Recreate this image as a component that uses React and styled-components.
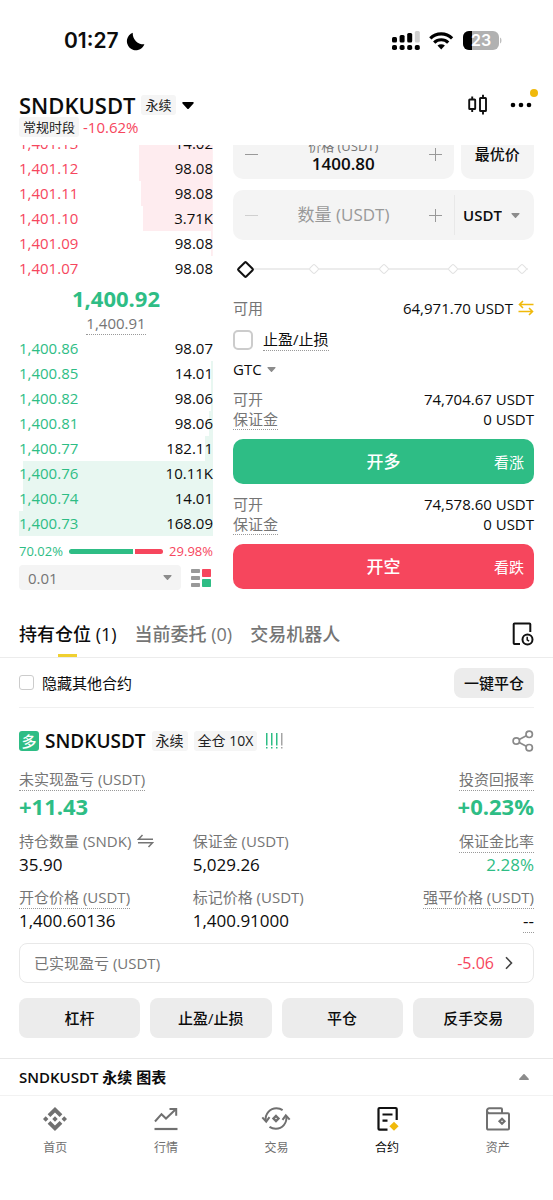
import React, { useState } from "react";
import styled, { createGlobalStyle } from "styled-components";
import { SiBinance } from "react-icons/si";

const asks = [
  { price: "1,401.13", amount: "14.02", depth: 38 },
  { price: "1,401.12", amount: "98.08", depth: 38 },
  { price: "1,401.11", amount: "98.08", depth: 37 },
  { price: "1,401.10", amount: "3.71K", depth: 36 },
  { price: "1,401.09", amount: "98.08", depth: 1 },
  { price: "1,401.07", amount: "98.08", depth: 0 },
];

const bids = [
  { price: "1,400.86", amount: "98.07", depth: 0 },
  { price: "1,400.85", amount: "14.01", depth: 1 },
  { price: "1,400.82", amount: "98.06", depth: 1 },
  { price: "1,400.81", amount: "98.06", depth: 2 },
  { price: "1,400.77", amount: "182.11", depth: 4 },
  { price: "1,400.76", amount: "10.11K", depth: 98 },
  { price: "1,400.74", amount: "14.01", depth: 98 },
  { price: "1,400.73", amount: "168.09", depth: 100 },
];

const metrics = [
  { label: "未实现盈亏 (USDT)", value: "+11.43", hint: true, large: true },
  { label: "投资回报率", value: "+0.23%", hint: true, large: true, end: true },
  { label: "持仓数量 (SNDK)", value: "35.90", swap: true },
  { label: "保证金 (USDT)", value: "5,029.26" },
  { label: "保证金比率", value: "2.28%", hint: true, green: true, end: true },
  { label: "开仓价格 (USDT)", value: "1,400.60136", hint: true },
  { label: "标记价格 (USDT)", value: "1,400.91000" },
  { label: "强平价格 (USDT)", value: "--", hint: true, valueHint: true, end: true },
];

const Caret = ({ up, size = 9, color = "#8c8c8c" }) => (
  <CaretSvg
    width={size}
    height={Math.round(size * 0.6)}
    viewBox="0 0 10 6"
    fill={color}
    $up={up}
    aria-hidden="true"
  >
    <path d="M.8 0h8.4c.7 0 1 .8.5 1.3L5.6 5.7a.8.8 0 0 1-1.2 0L.3 1.3C-.2.8.1 0 .8 0z" />
  </CaretSvg>
);

const StatusIcons = () => (
  <svg width="110" height="20" viewBox="0 0 110 20" aria-label="信号、无线网络、电量 23%">
    <g fill="#000">
      <rect x="0" y="6" width="5" height="5.5" rx="1.5" />
      <rect x="7.6" y="4" width="5" height="7.5" rx="1.5" />
      <rect x="15.2" y="2" width="5" height="9.5" rx="1.5" />
      <rect x="22.8" y="0" width="5" height="11.5" rx="1.5" fill="#d0d0d0" />
      <rect x="0" y="14" width="5" height="5" rx="1.8" />
      <rect x="7.6" y="14" width="5" height="5" rx="1.8" />
      <rect x="15.2" y="14" width="5" height="5" rx="1.8" />
      <rect x="22.8" y="14" width="5" height="5" rx="1.8" />
    </g>
    <g fill="none" stroke="#000" strokeWidth="3.2">
      <path d="M38.3 7.3a15.6 15.6 0 0 1 21.8 0" />
      <path d="M42.2 11.6a10 10 0 0 1 14 0" />
    </g>
    <path d="M49.2 18.5l-3.7-3.9a5.4 5.4 0 0 1 7.4 0z" />
    <clipPath id="cell">
      <rect x="71" y="0" width="36" height="19" rx="6" />
    </clipPath>
    <g clipPath="url(#cell)">
      <rect x="71" y="0" width="36" height="19" fill="#b1b1b1" />
      <rect x="71" y="0" width="9" height="19" fill="#000" />
    </g>
    <path d="M108.2 6.5c1.6.5 1.6 5.5 0 6z" fill="#b1b1b1" />
    <text
      x="89"
      y="15"
      textAnchor="middle"
      fill="#fff"
      fontFamily="Inter, sans-serif"
      fontSize="16"
      fontWeight="600"
    >
      23
    </text>
  </svg>
);

const MoonIcon = () => (
  <svg width="19" height="19" viewBox="0 0 19 19" aria-hidden="true">
    <path d="M6.8.8A9 9 0 1 0 18.4 12.200 10.500 10.500 0 0 1 6.800.8z" />
  </svg>
);

const CandlesIcon = () => (
  <svg width="20" height="22" viewBox="0 0 20 22" fill="none" stroke="#111" strokeWidth="1.9">
    <rect x="1.2" y="5.5" width="6" height="9.5" rx=".6" />
    <path d="M4.2 2.500v3M4.200 15v3" />
    <rect x="12" y="4" width="6" height="13" rx=".6" />
    <path d="M15 .8V4M15 17v3.600" />
  </svg>
);

const MoreIcon = () => (
  <svg width="22" height="6" viewBox="0 0 22 6">
    <circle cx="3" cy="3" r="2.3" />
    <circle cx="11" cy="3" r="2.3" />
    <circle cx="19" cy="3" r="2.3" />
  </svg>
);

const TransferIcon = () => (
  <svg width="16" height="16" viewBox="0 0 16 16" fill="none" stroke="#f0b90b" strokeWidth="1.6">
    <path d="M15.5 4.500H1.500M5 1L1.500 4.500 5 8" />
    <path d="M.5 11.500h14M11 8l3.500 3.500L11 15" />
  </svg>
);

const SwapIcon = () => (
  <svg width="17" height="22" viewBox="0 0 17 14" fill="none" stroke="#757575" strokeWidth="1.5">
    <path d="M5.5 1L1.500 5.300H16" />
    <path d="M1 8.700h14.500L11.500 13" />
  </svg>
);

const BookLayoutIcon = () => (
  <svg width="20" height="20" viewBox="0 0 20 20">
    <g fill="#999">
      <rect x="0" y="1" width="9" height="4" rx=".8" />
      <rect x="0" y="8" width="9" height="4" rx=".8" />
      <rect x="0" y="15" width="9" height="4" rx=".8" />
    </g>
    <rect x="11" y="1" width="9" height="8" rx=".8" fill="#f6465d" />
    <rect x="11" y="11" width="9" height="8" rx=".8" fill="#2ebd85" />
  </svg>
);

const HistoryIcon = () => (
  <svg width="22" height="24" viewBox="0 0 22 24" fill="none" stroke="#111" strokeWidth="2">
    <path d="M8 22H2.500a.8.8 0 0 1-.8-.8V2.300c0-.5.3-.8.8-.8h15c.5 0 .8.3.8.8V10" />
    <circle cx="15.5" cy="17.5" r="5" />
    <path d="M15.200 14.800v3l1.800 1.400" strokeWidth="1.5" />
  </svg>
);

const LevelBars = () => (
  <svg width="17" height="16" viewBox="0 0 17 16">
    {[0, 5, 10, 15].map((x) => (
      <g key={x} fill={x === 15 ? "#a5a5a5" : "#2ebd85"}>
        <rect x={x} y="0" width="1.5" height="12.5" />
        <rect x={x} y="14" width="1.5" height="1.5" />
      </g>
    ))}
  </svg>
);

const ShareIcon = () => (
  <svg width="22" height="22" viewBox="0 0 22 22" fill="none" stroke="#8a8a8a" strokeWidth="1.7">
    <circle cx="4.3" cy="11" r="3.2" />
    <circle cx="17.2" cy="4.3" r="3.2" />
    <circle cx="17.2" cy="17.7" r="3.2" />
    <path d="M7.200 9.500l7.100-3.700M7.200 12.500l7.100 3.700" />
  </svg>
);

const ChevronIcon = () => (
  <svg width="10" height="14" viewBox="0 0 10 14" fill="none" stroke="#444" strokeWidth="1.6">
    <path d="M2 1.200L7.500 7 2 12.800" />
  </svg>
);

const TrendIcon = () => (
  <svg width="26" height="26" viewBox="0 0 26 26" fill="none" stroke="#707070" strokeWidth="2">
    <path d="M2 15.500l6.500-7.300 4.500 4.300L22.500 3.500" />
    <path d="M16.500 3h6.700v6.700" />
    <path d="M1.500 23h23" strokeWidth="2.2" />
  </svg>
);

const TradeIcon = () => (
  <svg width="30" height="26" viewBox="0 0 30 26" fill="none" stroke="#707070" strokeWidth="2">
    <path d="M4.700 14.500C4 8 9 2.300 15.500 2.300c2.300 0 4.400.6 6.100 1.800" />
    <path d="M25.300 10.500c.9 6.500-4 12.200-10.500 12.200-2.400 0-4.500-.7-6.300-1.900" />
    <path d="M1.300 11.300l3.900 4.400 3.300-4.600M28.700 13.700l-3.900-4.400-3.300 4.600" />
    <path d="M15 10l2.500 2.500-2.500 2.500-2.500-2.500z" strokeWidth="2.4" />
  </svg>
);

const ContractIcon = () => (
  <svg width="26" height="26" viewBox="0 0 26 26" fill="none" stroke="#111" strokeWidth="2.2">
    <path d="M13.500 23.700H5.500c-.7 0-1-.4-1-1V3c0-.6.3-1 1-1h16.200c.7 0 1 .4 1 1v11" />
    <path d="M8.500 8.500h10M8.500 14.700h5" />
    <path d="M20 15.700l4.600 4.500-4.600 4.600-4.600-4.600z" fill="#f0b90b" stroke="none" />
  </svg>
);

const AssetsIcon = () => (
  <svg width="26" height="26" viewBox="0 0 26 26" fill="none" stroke="#707070" strokeWidth="2">
    <path d="M2 4.500V22c0 1 .6 1.600 1.600 1.600h19.400c.6 0 1-.4 1-1V8.300c0-.6-.4-1-1-1H17V3.300c0-.6-.4-1-1-1H4.300A2.300 2.300 0 0 0 2 4.600c0 1.500 1 2.700 2.500 2.700H17" />
    <path d="M17 12.700l2.500 2.500-2.500 2.500-2.500-2.500z" strokeWidth="2.2" />
  </svg>
);

const navItems = [
  { label: "首页", icon: <SiBinance size={24} color="#707070" /> },
  { label: "行情", icon: <TrendIcon /> },
  { label: "交易", icon: <TradeIcon /> },
  { label: "合约", icon: <ContractIcon />, active: true },
  { label: "资产", icon: <AssetsIcon /> },
];

const OrderRows = ({ rows, side }) => (
  <BookTable>
    <tbody>
      {rows.map((row) => (
        <BookRow key={row.price} $side={side} $depth={row.depth}>
          <td>{row.price}</td>
          <td>{row.amount}</td>
        </BookRow>
      ))}
    </tbody>
  </BookTable>
);

const OpenInfo = ({ amount }) => (
  <InfoList>
    <dt>可开</dt>
    <dd>{amount} USDT</dd>
    <dt>
      <Hint>保证金</Hint>
    </dt>
    <dd>0 USDT</dd>
  </InfoList>
);

const App = () => {
  const [price, setPrice] = useState("1400.80");
  const [amount, setAmount] = useState("");
  const [percent, setPercent] = useState(0);

  return (
    <Page>
      <GlobalStyle />
      <StatusBar>
        <Clock>
          01:27 <MoonIcon />
        </Clock>
        <StatusIcons />
      </StatusBar>

      <Header>
        <div>
          <PairButton>
            <h1>SNDKUSDT</h1>
            <Tag>永续</Tag>
            <Caret size={12} color="#000" />
          </PairButton>
          <Session>
            <Tag>常规时段</Tag>
            <Change>-10.62%</Change>
          </Session>
        </div>
        <HeaderActions>
          <IconButton aria-label="K线">
            <CandlesIcon />
          </IconButton>
          <IconButton aria-label="更多">
            <MoreIcon />
            <Dot />
          </IconButton>
        </HeaderActions>
      </Header>

      <TradeArea>
        <TradeColumns>
          <Book>
            <OrderRows rows={asks} side="ask" />
            <LastPrice>
              <strong>1,400.92</strong>
              <Hint>1,400.91</Hint>
            </LastPrice>
            <OrderRows rows={bids} side="bid" />
            <Ratio>
              <span>70.02%</span>
              <RatioBar $flex={70} $color="#2ebd85" />
              <RatioBar $flex={30} $color="#f6465d" $last />
              <span>29.98%</span>
            </Ratio>
            <BookFooter>
              <Precision>
                <select aria-label="价格精度">
                  <option>0.01</option>
                </select>
                <Caret />
              </Precision>
              <IconButton aria-label="订单簿布局">
                <BookLayoutIcon />
              </IconButton>
            </BookFooter>
          </Book>

          <Form onSubmit={(e) => e.preventDefault()}>
            <PriceRow>
              <Field>
                <Step type="button" aria-label="降低价格" />
                <PriceInput>
                  价格 (USDT)
                  <input value={price} onChange={(e) => setPrice(e.target.value)} />
                </PriceInput>
                <Step type="button" $plus aria-label="提高价格" />
              </Field>
              <BestPrice type="button">最优价</BestPrice>
            </PriceRow>
            <Field>
              <Step type="button" $faded aria-label="减少数量" />
              <AmountInput
                aria-label="数量 (USDT)"
                placeholder="数量 (USDT)"
                value={amount}
                onChange={(e) => setAmount(e.target.value)}
              />
              <Step type="button" $plus aria-label="增加数量" />
              <Unit>
                <select aria-label="单位">
                  <option>USDT</option>
                </select>
                <Caret />
              </Unit>
            </Field>
            <Slider>
              <Marks>
                <i />
                <i />
                <i />
                <i />
                <i />
              </Marks>
              <input
                type="range"
                min="0"
                max="100"
                aria-label="仓位比例"
                value={percent}
                onChange={(e) => setPercent(Number(e.target.value))}
              />
            </Slider>
            <Available>
              <span>可用</span>
              <b>64,971.70 USDT</b>
              <IconButton type="button" aria-label="划转">
                <TransferIcon />
              </IconButton>
            </Available>
            <CheckLabel $large>
              <input type="checkbox" />
              <Hint>止盈/止损</Hint>
            </CheckLabel>
            <TimeInForce>
              <select aria-label="生效时间">
                <option>GTC</option>
              </select>
              <Caret />
            </TimeInForce>
            <OpenInfo amount="74,704.67" />
            <OrderButton type="button" $color="#2ebd85">
              <span>开多</span>
              <small>看涨</small>
            </OrderButton>
            <OpenInfo amount="74,578.60" />
            <OrderButton type="button" $color="#f6465d">
              <span>开空</span>
              <small>看跌</small>
            </OrderButton>
          </Form>
        </TradeColumns>
      </TradeArea>

      <Tabs>
        <Tab $active>持有仓位 (1)</Tab>
        <Tab>当前委托 (0)</Tab>
        <Tab>交易机器人</Tab>
        <IconButton aria-label="历史记录">
          <HistoryIcon />
        </IconButton>
      </Tabs>

      <Positions>
        <FilterRow>
          <CheckLabel>
            <input type="checkbox" />
            <span>隐藏其他合约</span>
          </CheckLabel>
          <GrayButton $small>一键平仓</GrayButton>
        </FilterRow>

        <PositionHead>
          <Side>多</Side>
          <h2>SNDKUSDT</h2>
          <Tag $large>永续</Tag>
          <Tag $large>全仓 10X</Tag>
          <LevelBars />
          <IconButton aria-label="分享">
            <ShareIcon />
          </IconButton>
        </PositionHead>

        <Metrics>
          {metrics.map((m) => (
            <Metric key={m.label} $large={m.large} $end={m.end} $green={m.green}>
              <dt>
                {m.hint ? <Hint>{m.label}</Hint> : m.label}
                {m.swap && <SwapIcon />}
              </dt>
              <dd>{m.valueHint ? <Hint>{m.value}</Hint> : m.value}</dd>
            </Metric>
          ))}
        </Metrics>

        <Realized>
          <span>已实现盈亏 (USDT)</span>
          <b>-5.06</b>
          <ChevronIcon />
        </Realized>

        <Actions>
          <GrayButton>杠杆</GrayButton>
          <GrayButton>止盈/止损</GrayButton>
          <GrayButton>平仓</GrayButton>
          <GrayButton>反手交易</GrayButton>
        </Actions>
      </Positions>

      <ChartToggle>
        SNDKUSDT 永续 图表
        <Caret up size={10} />
      </ChartToggle>

      <Nav>
        {navItems.map((item) => (
          <NavLink
            key={item.label}
            href="#"
            $active={item.active}
            aria-current={item.active ? "page" : undefined}
          >
            <span>{item.icon}</span>
            {item.label}
          </NavLink>
        ))}
      </Nav>
    </Page>
  );
};

export default App;

const GlobalStyle = createGlobalStyle`
  * {
    box-sizing: border-box;
  }

  body {
    margin: 0;
    background: #fff;
    color: #0c0c0c;
    font-family: "Open Sans", "Noto Sans CJK SC", sans-serif;
    font-size: 15px;
    line-height: 20px;
  }

  h1, h2, dl, dd {
    margin: 0;
  }

  button, input, select {
    margin: 0;
    padding: 0;
    border: 0;
    background: none;
    color: inherit;
    font: inherit;
  }

  select {
    appearance: none;
    outline: none;
  }

  svg {
    display: block;
    flex: none;
  }
`;

const CaretSvg = styled.svg`
  transform: ${({ $up }) => ($up ? "rotate(180deg)" : "none")};
  pointer-events: none;
`;

const Page = styled.div`
  min-height: 100vh;
  background: #fff;
`;

const StatusBar = styled.div`
  display: flex;
  align-items: center;
  justify-content: space-between;
  height: 82px;
  padding: 0 51px 0 64px;
`;

const Clock = styled.div`
  display: flex;
  align-items: center;
  gap: 7px;
  font: 600 21px/26px Inter, sans-serif;
`;

const Header = styled.header`
  display: flex;
  justify-content: space-between;
  height: 63px;
  padding: 11px 21px 0 19px;
`;

const HeaderActions = styled.div`
  display: flex;
  align-items: center;
  gap: 22px;
  height: 24px;
`;

const IconButton = styled.button`
  position: relative;
  display: flex;
  flex: none;
`;

const Dot = styled.span`
  position: absolute;
  top: -13px;
  right: -6px;
  width: 8px;
  height: 8px;
  border-radius: 50%;
  background: #f0b90b;
`;

const PairButton = styled.button`
  display: flex;
  align-items: center;
  gap: 6px;
  height: 24px;

  h1 {
    font-size: 22px;
    font-weight: 600;
    line-height: 24px;
  }
`;

const Tag = styled.span`
  padding: 0 4px;
  border-radius: 3px;
  background: #f5f5f5;
  color: #202020;
  font-size: ${({ $large }) => ($large ? 14 : 13)}px;
  line-height: 20px;
`;

const Session = styled.div`
  display: flex;
  gap: 4px;
`;

const Change = styled.span`
  color: #f6465d;
`;

const Hint = styled.span`
  border-bottom: 1px dotted #999;
`;

const TradeArea = styled.section`
  overflow: hidden;
`;

const TradeColumns = styled.div`
  display: grid;
  grid-template-columns: 194fr 301fr;
  gap: 20px;
  /* scrolled a little way under the header */
  margin-top: -16px;
  padding: 0 19px;
`;

const Book = styled.div`
  padding-top: 2px;
`;

const BookTable = styled.table`
  width: 100%;
  border-collapse: collapse;

  td {
    padding: 0 0 2px;
  }

  td:last-child {
    text-align: right;
  }
`;

const BookRow = styled.tr`
  height: 25px;
  background: ${({ $side, $depth }) =>
    `linear-gradient(to left, ${$side === "ask" ? "#feecef" : "#e8f7f1"} ${$depth}%, transparent ${$depth}%)`};

  td:first-child {
    color: ${({ $side }) => ($side === "ask" ? "#f6465d" : "#2ebd85")};
  }
`;

const LastPrice = styled.div`
  display: flex;
  flex-direction: column;
  align-items: center;
  height: 55px;
  padding-top: 3px;
  color: #757575;

  strong {
    color: #2ebd85;
    font-size: 22px;
    font-weight: 700;
    line-height: 28px;
  }

  ${Hint} {
    line-height: 22px;
  }
`;

const Ratio = styled.div`
  display: flex;
  align-items: center;
  gap: 2px;
  margin-top: 5px;
  font-size: 13px;

  span:first-child {
    margin-right: 4px;
    color: #2ebd85;
  }

  span:last-child {
    margin-left: 4px;
    color: #f6465d;
  }
`;

const RatioBar = styled.i`
  flex: ${({ $flex }) => $flex};
  height: 5px;
  border-radius: ${({ $last }) => ($last ? "0 3px 3px 0" : "3px 0 0 3px")};
  background: ${({ $color }) => $color};
`;

const BookFooter = styled.div`
  display: flex;
  align-items: center;
  gap: 10px;
  margin-top: 4px;
  padding-right: 2px;
`;

const Precision = styled.label`
  display: flex;
  flex: 1;
  align-items: center;
  height: 25px;
  padding: 0 9px;
  border-radius: 4px;
  background: #f4f4f4;
  color: #757575;

  select {
    flex: 1;
  }
`;

const Form = styled.form`
  min-width: 0;
`;

const PriceRow = styled.div`
  display: grid;
  grid-template-columns: 3fr 1fr;
  gap: 7px;
  margin-bottom: 11px;
`;

const Field = styled.div`
  display: flex;
  align-items: center;
  height: 50px;
  padding-left: 12px;
  border-radius: 10px;
  background: #f4f4f4;
`;

const Step = styled.button`
  flex: none;
  width: 13px;
  height: 13px;
  margin-right: ${({ $plus }) => ($plus ? 12 : 0)}px;
  background:
    linear-gradient(#999, #999) center / 13px 1px no-repeat,
    linear-gradient(#999, #999) center / ${({ $plus }) => ($plus ? "1px 13px" : "0 0")} no-repeat;
  opacity: ${({ $faded }) => ($faded ? 0.4 : 1)};
`;

const PriceInput = styled.label`
  display: flex;
  flex: 1;
  flex-direction: column;
  min-width: 0;
  padding-top: 2px;
  color: #757575;
  font-size: 13px;
  line-height: 16px;
  text-align: center;

  input {
    width: 100%;
    height: 18px;
    color: #0c0c0c;
    font-size: 17px;
    font-weight: 600;
    text-align: center;
  }
`;

const BestPrice = styled.button`
  border-radius: 10px;
  background: #f4f4f4;
  font-weight: 500;
`;

const AmountInput = styled.input`
  flex: 1;
  min-width: 0;
  font-size: 17px;
  text-align: center;

  &::placeholder {
    color: #999;
  }
`;

const Unit = styled.label`
  display: flex;
  align-items: center;
  gap: 9px;
  height: 40px;
  padding: 0 14px 0 8px;
  border-left: 1px solid #e8e8e8;
  font-weight: 600;
`;

const Slider = styled.div`
  display: grid;
  align-items: center;
  height: 24px;
  margin-top: 17px;
  padding: 0 6px;

  > * {
    grid-area: 1 / 1;
  }

  input {
    height: 24px;
    appearance: none;
  }

  input::-webkit-slider-thumb {
    width: 13px;
    height: 13px;
    border: 2px solid #111;
    border-radius: 2px;
    background: #fff;
    appearance: none;
    transform: rotate(45deg);
  }
`;

const Marks = styled.div`
  display: flex;
  align-items: center;
  justify-content: space-between;
  padding: 0 2px;
  background: linear-gradient(#ececec, #ececec) center / 100% 2px no-repeat;

  i {
    width: 8px;
    height: 8px;
    border: 1px solid #e2e2e2;
    border-radius: 2px;
    background: #fff;
    transform: rotate(45deg);
  }
`;

const Available = styled.div`
  display: flex;
  align-items: center;
  gap: 5px;
  margin-top: 17px;

  span {
    flex: 1;
    color: #757575;
  }

  b {
    font-weight: 400;
  }
`;

const CheckLabel = styled.label`
  display: flex;
  align-items: center;
  gap: ${({ $large }) => ($large ? 10 : 8)}px;
  margin-top: ${({ $large }) => ($large ? 10 : 0)}px;
  line-height: 22px;

  input {
    width: ${({ $large }) => ($large ? 20 : 15)}px;
    height: ${({ $large }) => ($large ? 20 : 15)}px;
    border: ${({ $large }) => ($large ? 2 : 1)}px solid #ccc;
    border-radius: ${({ $large }) => ($large ? 5 : 3)}px;
    appearance: none;
  }

  input:checked {
    background: #111;
  }
`;

const TimeInForce = styled.label`
  display: inline-flex;
  align-items: center;
  gap: 5px;
  margin-top: 8px;
`;

const InfoList = styled.dl`
  display: grid;
  grid-template-columns: auto 1fr;
  grid-auto-rows: 20px;
  margin: 10px 0;

  dt {
    color: #757575;
  }

  dd {
    text-align: right;
  }
`;

const OrderButton = styled.button`
  display: grid;
  grid-template-columns: 1fr auto 1fr;
  align-items: center;
  width: 100%;
  height: 45px;
  padding: 0 10px;
  border-radius: 10px;
  background: ${({ $color }) => $color};
  color: #fff;

  span {
    grid-column: 2;
    font-size: 17px;
    font-weight: 500;
  }

  small {
    font-size: 15px;
    text-align: right;
  }
`;

const Tabs = styled.nav`
  display: flex;
  align-items: center;
  gap: 18px;
  height: 47px;
  margin-top: 21px;
  padding: 0 19px;
  border-bottom: 1px solid #ececec;

  ${IconButton} {
    margin-left: auto;
  }
`;

const Tab = styled.button`
  height: 46px;
  color: ${({ $active }) => ($active ? "#0c0c0c" : "#757575")};
  background: ${({ $active }) =>
    $active ? "linear-gradient(#f0d030, #f0d030) bottom / 19px 3px no-repeat" : "none"};
  font-size: 18px;
  font-weight: 500;
`;

const Positions = styled.section`
  padding: 0 19px 20px;
`;

const FilterRow = styled.div`
  display: flex;
  align-items: center;
  justify-content: space-between;
  height: 50px;
  border-bottom: 1px solid #f0f0f0;
`;

const GrayButton = styled.button`
  height: ${({ $small }) => ($small ? 30 : 40)}px;
  padding: 0 10px;
  border-radius: 8px;
  background: #ececec;
  font-weight: 500;
`;

const PositionHead = styled.div`
  display: flex;
  align-items: center;
  gap: 6px;
  height: 24px;
  margin: 21px 0 15px;

  h2 {
    font-size: 19px;
    font-weight: 600;
    line-height: 24px;
  }

  ${Tag} + svg {
    margin-left: 3px;
  }

  ${IconButton} {
    margin-left: auto;
  }
`;

const Side = styled.span`
  width: 20px;
  border-radius: 3px;
  background: #2ebd85;
  color: #fff;
  font-weight: 500;
  text-align: center;
`;

const Metrics = styled.dl`
  display: grid;
  grid-template-columns: repeat(3, 1fr);
  gap: 9px 6px;
`;

const Metric = styled.div`
  grid-column: ${({ $end }) => ($end ? 3 : "auto")};
  text-align: ${({ $end }) => ($end ? "right" : "left")};
  white-space: nowrap;

  dt {
    display: flex;
    align-items: flex-start;
    justify-content: ${({ $end }) => ($end ? "flex-end" : "flex-start")};
    gap: 6px;
    height: 23px;
    color: #757575;
    font-size: 15px;
    line-height: 22px;
  }

  dd {
    color: ${({ $large, $green }) => ($large || $green ? "#2ebd85" : "#0c0c0c")};
    font-size: ${({ $large }) => ($large ? 22 : 17)}px;
    font-weight: ${({ $large }) => ($large ? 700 : 400)};
    line-height: ${({ $large }) => ($large ? 30 : 24)}px;
  }
`;

const Realized = styled.button`
  display: flex;
  align-items: center;
  width: 100%;
  height: 40px;
  margin: 10px 0 15px;
  padding: 0 19px 0 14px;
  border: 1px solid #e8e8e8;
  border-radius: 8px;
  color: #757575;

  b {
    margin: 0 10px 0 auto;
    color: #f6465d;
    font-size: 16px;
    font-weight: 400;
  }
`;

const Actions = styled.div`
  display: grid;
  grid-template-columns: repeat(4, 1fr);
  gap: 10px;
`;

const ChartToggle = styled.button`
  display: flex;
  align-items: center;
  justify-content: space-between;
  width: 100%;
  height: 37px;
  padding: 0 24px 0 19px;
  border-top: 1px solid #e8e8e8;
  font-weight: 600;
`;

const Nav = styled.nav`
  display: grid;
  grid-template-columns: repeat(5, 1fr);
  padding: 10px 0 0;
  border-top: 1px solid #f2f2f2;
`;

const NavLink = styled.a`
  display: flex;
  flex-direction: column;
  align-items: center;
  gap: 7px;
  color: ${({ $active }) => ($active ? "#0c0c0c" : "#707070")};
  font-size: 12px;
  line-height: 18px;
  text-decoration: none;

  span {
    display: flex;
    align-items: center;
    height: 26px;
  }
`;
